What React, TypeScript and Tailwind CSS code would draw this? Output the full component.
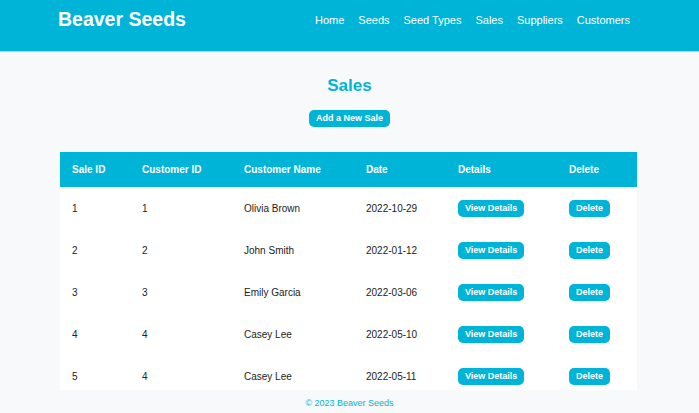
import React from "react";

const rows = [
  { id: 1, cid: 1, name: "Olivia Brown", date: "2022-10-29" },
  { id: 2, cid: 2, name: "John Smith", date: "2022-01-12" },
  { id: 3, cid: 3, name: "Emily Garcia", date: "2022-03-06" },
  { id: 4, cid: 4, name: "Casey Lee", date: "2022-05-10" },
  { id: 5, cid: 4, name: "Casey Lee", date: "2022-05-11" },
];

const navs = ["Home", "Seeds", "Seed Types", "Sales", "Suppliers", "Customers"];

export default function App() {
  return (
    <div
      className="min-h-[413px] bg-[#f8f9fa] text-[#222]"
      style={{ fontFamily: '"Liberation Sans", Arial, sans-serif' }}
    >
      <header className="h-[52px] bg-[#00b4d8] border-b border-[#9adcea]">
        <div className="flex h-[40px] items-center justify-between pl-[58px] pr-[69px]">
          <div className="text-[19.5px] font-bold text-white leading-none">Beaver Seeds</div>
          <nav className="flex gap-[14px] text-[11px] text-white">
            {navs.map((n) => (
              <a key={n} className="leading-none">{n}</a>
            ))}
          </nav>
        </div>
      </header>
      <main className="flex flex-col items-center">
        <h1 className="mt-[25px] text-[17px] font-bold leading-[18px] text-[#00b4d8]">Sales</h1>
        <button className="mt-[15px] h-[17px] rounded-[5px] bg-[#00b4d8] px-[7px] text-[9px] font-bold leading-none text-white">
          Add a New Sale
        </button>
        <table className="mt-[25px] ml-[60px] w-[577px] self-start border-collapse bg-white text-left text-[10px]">
          <thead>
            <tr className="h-[35px] bg-[#00b4d8] text-white">
              <th className="w-[70px] pl-[12px] font-bold">Sale ID</th>
              <th className="w-[102px] pl-[12px] font-bold">Customer ID</th>
              <th className="w-[122px] pl-[12px] font-bold">Customer Name</th>
              <th className="w-[92px] pl-[12px] font-bold">Date</th>
              <th className="w-[111px] pl-[12px] font-bold">Details</th>
              <th className="pl-[12px] font-bold">Delete</th>
            </tr>
          </thead>
          <tbody>
            {rows.map((r) => (
              <tr key={r.id} className="h-[42px]">
                <td className="pl-[12px]">{r.id}</td>
                <td className="pl-[12px]">{r.cid}</td>
                <td className="pl-[12px]">{r.name}</td>
                <td className="pl-[12px]">{r.date}</td>
                <td className="pl-[12px]">
                  <button className="h-[17px] rounded-[5px] bg-[#00b4d8] px-[7px] text-[9px] font-bold leading-none text-white">
                    View Details
                  </button>
                </td>
                <td className="pl-[12px]">
                  <button className="h-[17px] rounded-[5px] bg-[#00b4d8] px-[7px] text-[9px] font-bold leading-none text-white">
                    Delete
                  </button>
                </td>
              </tr>
            ))}
          </tbody>
        </table>
      </main>
      <footer className="fixed bottom-0 left-0 right-0 flex h-[23px] items-center justify-center bg-[#f8f9fa] pt-[5px] text-[9px] text-[#00b4d8]">
        © 2023 Beaver Seeds
      </footer>
    </div>
  );
}
